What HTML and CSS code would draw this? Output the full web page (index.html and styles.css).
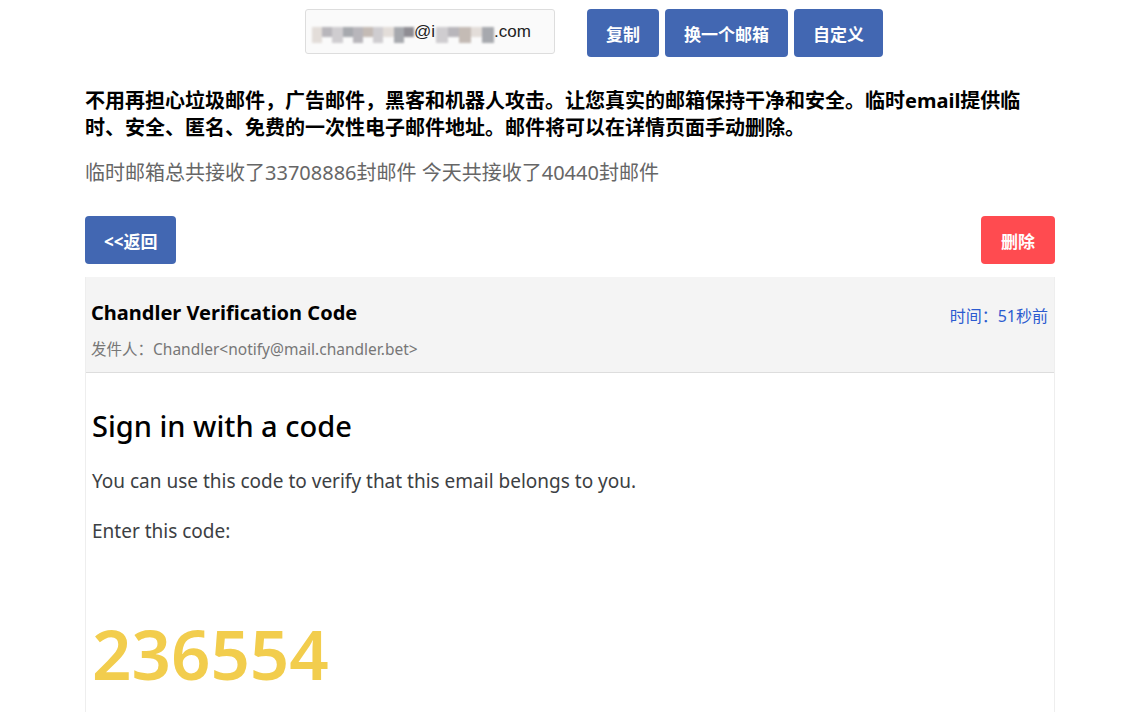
FILE: index.html
```html
<!DOCTYPE html>
<html lang="zh-CN">
<head>
    <meta charset="UTF-8">
    <meta name="viewport" content="width=device-width, initial-scale=1.0">
    <title>临时邮箱 - 邮件详情</title>
    <link rel="stylesheet" href="styles.css">
</head>
<body>
<div class="page">

    <!-- 顶部 邮箱地址 + 操作按钮 -->
    <div class="topbar">
        <div class="addr">
            <span class="mosaic">
                <i class="m1"></i><i class="m2"></i><i class="m3"></i><i class="m4"></i><i class="m2"></i><i class="m5"></i><i class="m3"></i><i class="m1"></i><i class="m4"></i><i class="m6"></i>
            </span>@i<span class="mosaic short">
                <i class="m3"></i><i class="m2"></i><i class="m5"></i><i class="m1"></i><i class="m4"></i>
            </span>.com
        </div>
        <div class="actions">
            <a class="btn" href="#">复制</a>
            <a class="btn" href="#">换一个邮箱</a>
            <a class="btn" href="#">自定义</a>
        </div>
    </div>

    <p class="intro">不用再担心垃圾邮件，广告邮件，黑客和机器人攻击。让您真实的邮箱保持干净和安全。临时email提供临时、安全、匿名、免费的一次性电子邮件地址。邮件将可以在详情页面手动删除。</p>
    <p class="stats">临时邮箱总共接收了33708886封邮件 今天共接收了40440封邮件</p>

    <!-- 返回 / 删除 -->
    <div class="toolbar">
        <a class="btn" href="#">&lt;&lt;返回</a>
        <a class="btn btn-red" href="#">删除</a>
    </div>

    <!-- 邮件内容 -->
    <div class="mail">
        <div class="mail-head">
            <div>
                <h2>Chandler Verification Code</h2>
                <p class="from">发件人：Chandler&lt;notify@mail.chandler.bet&gt;</p>
            </div>
            <span class="time">时间：51秒前</span>
        </div>
        <div class="mail-body">
            <h1>Sign in with a code</h1>
            <p>You can use this code to verify that this email belongs to you.</p>
            <p>Enter this code:</p>
            <div class="code">236554</div>
        </div>
    </div>

</div>
</body>
</html>
```

FILE: styles.css
```css
*{
    box-sizing: border-box;
    margin:0;
    padding:0;
}
body{
    font-family: "Noto Sans", "Noto Sans CJK SC", sans-serif;
    color:#000;
    background:#fff;
}
.page{
    width:970px;
    margin-left:85px;
}
a{
    text-decoration: none;
}

/* 顶部 */
.topbar{
    display:flex;
    align-items:flex-start;
    padding:9px 0 0 220px;
}
.addr{
    width:250px;
    height:45px;
    border:1px solid #ddd;
    border-radius:3px;
    background:#fafafa;
    display:flex;
    align-items:center;
    padding-left:6px;
    font-family: "Liberation Sans", Arial, sans-serif;
    font-size:17px;
    color:#222;
}
.mosaic{
    display:flex;
    align-items:center;
    width:102px;
    height:22px;
    filter: blur(0.8px);
}
.mosaic.short{
    width:58px;
    margin-left:1px;
}
.mosaic i{
    display:block;
    flex:1;
    height:10px;
}
.mosaic i:nth-child(odd){
    height:16px;
    margin-top:6px;
}
.m1{ background:#e3ddd9; }
.m2{ background:#b8b6bb; }
.m3{ background:#cfcdd0; }
.m4{ background:#a7a9ae; }
.m5{ background:#c4bbb5; }
.m6{ background:#8f8d93; }

.actions{
    display:flex;
    gap:6px;
    margin-left:32px;
}
.btn{
    display:inline-flex;
    align-items:center;
    justify-content:center;
    height:48px;
    padding:0 19px;
    border-radius:4px;
    background:#4267b2;
    color:#fff;
    font-size:17px;
    font-weight:bold;
}
.btn-red{
    background:#ff4b50;
    padding:0 20px;
}

/* 介绍文字 */
.intro{
    margin-top:30px;
    width:950px;
    font-size:20px;
    font-weight:bold;
    line-height:27px;
}
.stats{
    margin-top:18px;
    font-size:20px;
    color:#666;
    line-height:28px;
}

.toolbar{
    display:flex;
    justify-content:space-between;
    margin-top:29px;
}

/* 邮件 */
.mail{
    margin-top:13px;
    border-left:1px solid #eee;
    border-right:1px solid #eee;
}
.mail-head{
    display:flex;
    justify-content:space-between;
    align-items:flex-start;
    background:#f4f4f4;
    border-bottom:1px solid #ddd;
    padding:21px 6px 13px 5px;
}
.mail-head h2{
    font-size:20px;
    font-weight:bold;
    line-height:30px;
}
.from{
    margin-top:11px;
    font-size:15.5px;
    color:#777;
    line-height:20px;
}
.time{
    margin-top:5px;
    font-size:16px;
    color:#2c5bd0;
}
.mail-body{
    padding:33px 6px 40px 6px;
    color:#3c4043;
}
.mail-body h1{
    font-size:29px;
    font-weight:500;
    color:#000;
    line-height:40px;
}
.mail-body p{
    margin-top:20px;
    font-size:19px;
    line-height:30px;
}
.code{
    margin-top:62px;
    font-size:69px;
    font-weight:600;
    color:#f2cd4d;
    line-height:90px;
}
```
